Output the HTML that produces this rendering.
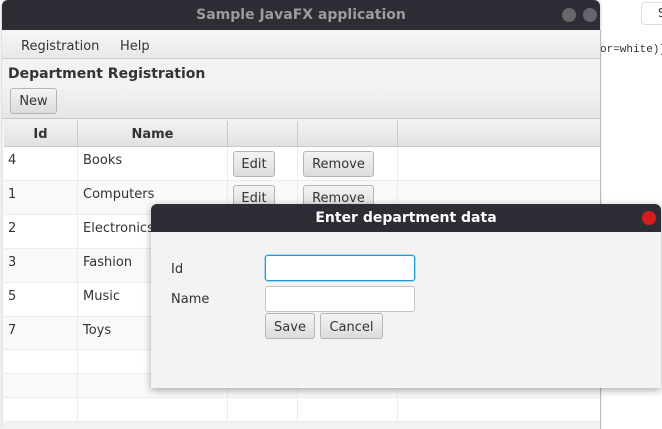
<!DOCTYPE html>
<html><head><style>
*{box-sizing:border-box;margin:0;padding:0}
body{width:662px;height:429px;overflow:hidden;background:#fff;font-family:"DejaVu Sans","Liberation Sans",sans-serif;font-size:13px;color:#333;position:relative}
.abs{position:absolute}
.btn{position:absolute;border:1px solid #b5b5b5;border-radius:3px;background:linear-gradient(#f4f4f4,#dcdcdc);text-align:center;color:#333;font-size:13px}
.hc{position:absolute;top:0;height:25px;border-right:1px solid #c8c8c8;font-weight:bold;text-align:center;line-height:27px}
.row{position:absolute;left:4px;width:596px;border-bottom:1px solid #ececec;background:#fff}
.row.alt{background:#f9f9f9}
.row span{top:6px!important}
.cell{position:absolute;top:0;bottom:0;border-right:1px solid #ececec}
</style></head><body>
<div class="abs" style="left:641px;top:2px;width:30px;height:23px;border:1px solid #ddd;border-radius:4px;font-size:12px;padding:3px 0 0 16px">S</div>
<div class="abs" style="left:600px;top:44px;font-family:'Liberation Mono',monospace;font-size:11px">or=white)]</div>

<div class="abs" style="left:2px;top:0;width:598px;height:429px;background:#f2f2f2;border-radius:6px 6px 0 0;overflow:hidden;box-shadow:0 0 3px rgba(0,0,0,.3)">
 <div class="abs" style="left:0;top:0;width:598px;height:30px;background:#2c2d35;color:#9c9c9c;font-weight:bold;font-size:14px;text-align:center;line-height:30px">Sample JavaFX application</div>
 <div class="abs" style="left:560px;top:8px;width:14px;height:14px;border-radius:50%;background:#66666c"></div>
 <div class="abs" style="left:581px;top:8px;width:14px;height:14px;border-radius:50%;background:#66666c"></div>
 <div class="abs" style="left:0;top:30px;width:598px;height:29px;background:linear-gradient(#f7f7f7,#e8e8e8);border-bottom:1px solid #ccc"></div>
 <div class="abs" style="left:19px;top:39px">Registration</div>
 <div class="abs" style="left:118px;top:39px">Help</div>
 <div class="abs" style="left:6px;top:66px;font-weight:bold;font-size:14px">Department Registration</div>
 <div class="abs" style="left:0;top:82px;width:598px;height:37px;background:linear-gradient(#f4f4f4,#e6e6e6);border-bottom:1px solid #c8c8c8"></div>
 <div class="btn" style="left:8px;top:88px;width:47px;height:26px;line-height:26px">New</div>
 <div class="abs" style="left:2px;top:121px;width:596px;height:26px;background:linear-gradient(#f2f2f2,#e2e2e2);border-bottom:1px solid #c8c8c8">
  <div class="hc" style="left:0;width:74px">Id</div>
  <div class="hc" style="left:74px;width:150px">Name</div>
  <div class="hc" style="left:224px;width:70px"></div>
  <div class="hc" style="left:294px;width:100px"></div>
 </div>
</div>
<div class="abs" style="left:4px;top:147px;width:596px;height:282px;background:#fff"></div>
<div class="row" style="top:147px;height:34px"><div class="cell" style="left:0;width:74px"></div><div class="cell" style="left:74px;width:150px"></div><div class="cell" style="left:224px;width:70px"></div><div class="cell" style="left:294px;width:100px"></div><span class="abs" style="left:4px">4</span><span class="abs" style="left:79px">Books</span></div>
<div class="row alt" style="top:181px;height:34px"><div class="cell" style="left:0;width:74px"></div><div class="cell" style="left:74px;width:150px"></div><div class="cell" style="left:224px;width:70px"></div><div class="cell" style="left:294px;width:100px"></div><span class="abs" style="left:4px">1</span><span class="abs" style="left:79px">Computers</span></div>
<div class="row" style="top:215px;height:34px"><div class="cell" style="left:0;width:74px"></div><div class="cell" style="left:74px;width:150px"></div><span class="abs" style="left:4px">2</span><span class="abs" style="left:79px">Electronics</span></div>
<div class="row alt" style="top:249px;height:34px"><div class="cell" style="left:0;width:74px"></div><div class="cell" style="left:74px;width:150px"></div><span class="abs" style="left:4px">3</span><span class="abs" style="left:79px">Fashion</span></div>
<div class="row" style="top:283px;height:34px"><div class="cell" style="left:0;width:74px"></div><div class="cell" style="left:74px;width:150px"></div><span class="abs" style="left:4px">5</span><span class="abs" style="left:79px">Music</span></div>
<div class="row alt" style="top:317px;height:33px"><div class="cell" style="left:0;width:74px"></div><div class="cell" style="left:74px;width:150px"></div><span class="abs" style="left:4px">7</span><span class="abs" style="left:79px">Toys</span></div>
<div class="row" style="top:350px;height:24px"><div class="cell" style="left:0;width:74px"></div><div class="cell" style="left:74px;width:150px"></div><div class="cell" style="left:224px;width:70px"></div><div class="cell" style="left:294px;width:100px"></div></div>
<div class="row alt" style="top:374px;height:24px"><div class="cell" style="left:0;width:74px"></div><div class="cell" style="left:74px;width:150px"></div><div class="cell" style="left:224px;width:70px"></div><div class="cell" style="left:294px;width:100px"></div></div>
<div class="row" style="top:398px;height:24px"><div class="cell" style="left:0;width:74px"></div><div class="cell" style="left:74px;width:150px"></div><div class="cell" style="left:224px;width:70px"></div><div class="cell" style="left:294px;width:100px"></div></div>
<div class="abs" style="left:2px;top:422px;width:598px;height:7px;background:#f2f2f2"></div>
<div class="abs" style="left:600px;top:30px;width:1px;height:399px;background:#bbb"></div>
<div class="btn" style="left:233px;top:151px;width:42px;height:26px;line-height:26px">Edit</div>
<div class="btn" style="left:303px;top:151px;width:71px;height:26px;line-height:26px">Remove</div>
<div class="btn" style="left:233px;top:185px;width:42px;height:26px;line-height:26px">Edit</div>
<div class="btn" style="left:303px;top:185px;width:71px;height:26px;line-height:26px">Remove</div>

<div class="abs" style="left:151px;top:204px;width:510px;height:184px;background:#f3f3f3;border-radius:6px 6px 0 0;box-shadow:0 2px 8px rgba(0,0,0,.35);overflow:hidden">
 <div class="abs" style="left:0;top:0;width:510px;height:28px;background:#2c2d35;color:#fff;font-weight:bold;font-size:14px;text-align:center;line-height:28px">Enter department data</div>
 <div class="abs" style="left:491px;top:7px;width:14px;height:14px;border-radius:50%;background:#d61d1d"></div>
 <div class="abs" style="left:20px;top:58px">Id</div>
 <div class="abs" style="left:20px;top:88px">Name</div>
 <div class="abs" style="left:114px;top:51px;width:150px;height:26px;background:#fff;border:1px solid #1b9ad6;border-radius:3px;box-shadow:0 0 0 1px #a9d8f0"></div>
 <div class="abs" style="left:114px;top:82px;width:150px;height:26px;background:#fff;border:1px solid #c4c4c4;border-radius:3px"></div>
 <div class="btn" style="left:114px;top:109px;width:50px;height:26px;line-height:27px">Save</div>
 <div class="btn" style="left:169px;top:109px;width:63px;height:26px;line-height:27px">Cancel</div>
</div>
</body></html>
